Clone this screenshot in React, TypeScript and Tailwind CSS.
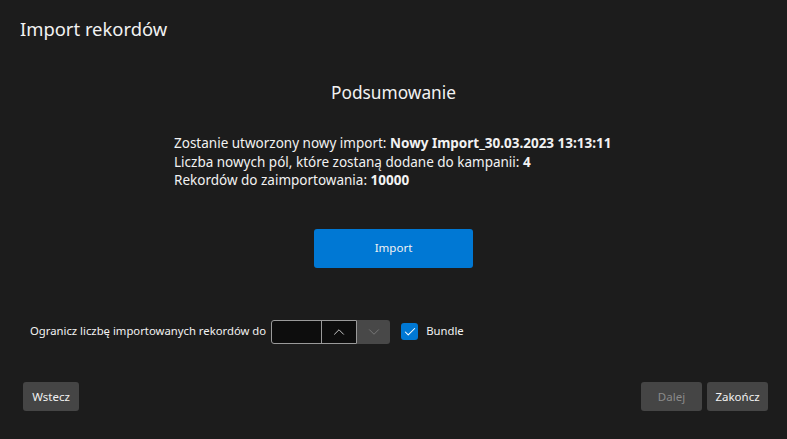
import { Check, ChevronDown, ChevronUp } from 'lucide-react'

const font = { fontFamily: '"Segoe UI", "Noto Sans", sans-serif' }

export default function App() {
  return (
    <div className="w-[787px] h-[439px] bg-[#1c1c1c] text-white flex flex-col" style={font}>
      {/* Header */}
      <h1 className="pl-[20px] pt-[15px] text-[18.4px] leading-[28px] font-normal text-[#f2f2f2]">
        Import rekordów
      </h1>

      {/* Summary */}
      <div className="flex flex-col items-center">
        <h2 className="mt-[36px] text-[17.3px] leading-[28px] text-[#f2f2f2]">Podsumowanie</h2>
        <div className="mt-[27px] self-start ml-[174px] text-[13.5px] leading-[18.5px] text-[#f2f2f2]">
          <p>
            Zostanie utworzony nowy import: <b className="font-bold">Nowy Import_30.03.2023 13:13:11</b>
          </p>
          <p>
            Liczba nowych pól, które zostaną dodane do kampanii: <b className="font-bold">4</b>
          </p>
          <p>
            Rekordów do zaimportowania: <b className="font-bold">10000</b>
          </p>
        </div>
        <button className="mt-[39px] w-[159px] h-[39px] rounded-[3px] bg-[#0078d4] text-[11.5px] text-[#f2f2f2]">
          Import
        </button>
      </div>

      {/* Limit row */}
      <div className="mt-[52px] ml-[30px] flex items-center h-[24px]">
        <span className="text-[11.3px] text-[#f2f2f2] mr-[5px]">Ogranicz liczbę importowanych rekordów do</span>
        <div className="flex h-[24px]">
          <div className="flex border border-[#9a9a9a] rounded-l-[3px] bg-[#0d0d0d]">
            <input className="w-[50px] bg-transparent outline-none border-r border-[#9a9a9a]" />
            <button className="w-[34px] flex items-center justify-center">
              <ChevronUp size={18} strokeWidth={1.2} className="text-[#d8d8d8]" />
            </button>
          </div>
          <button className="w-[33px] flex items-center justify-center bg-[#484848] rounded-r-[3px]">
            <ChevronDown size={18} strokeWidth={1.2} className="text-[#7a7a7a]" />
          </button>
        </div>
        <div className="ml-[11px] w-[17px] h-[17px] rounded-[3px] bg-[#0078d4] flex items-center justify-center">
          <Check size={14} strokeWidth={1.8} className="text-white" />
        </div>
        <span className="ml-[8px] text-[11.3px] text-[#f2f2f2]">Bundle</span>
      </div>

      {/* Footer */}
      <div className="mt-auto mb-[28px] mx-[19px] flex items-center">
        <button className="ml-[4px] w-[56px] h-[29px] rounded-[3px] bg-[#454545] text-[11.5px] text-[#f2f2f2]">
          Wstecz
        </button>
        <div className="ml-auto flex gap-[5px]">
          <button className="w-[61px] h-[29px] rounded-[3px] bg-[#454545] text-[11.5px] text-[#8a8a8a]">
            Dalej
          </button>
          <button className="w-[61px] h-[29px] rounded-[3px] bg-[#454545] text-[11.5px] text-[#f2f2f2]">
            Zakończ
          </button>
        </div>
      </div>
    </div>
  )
}
